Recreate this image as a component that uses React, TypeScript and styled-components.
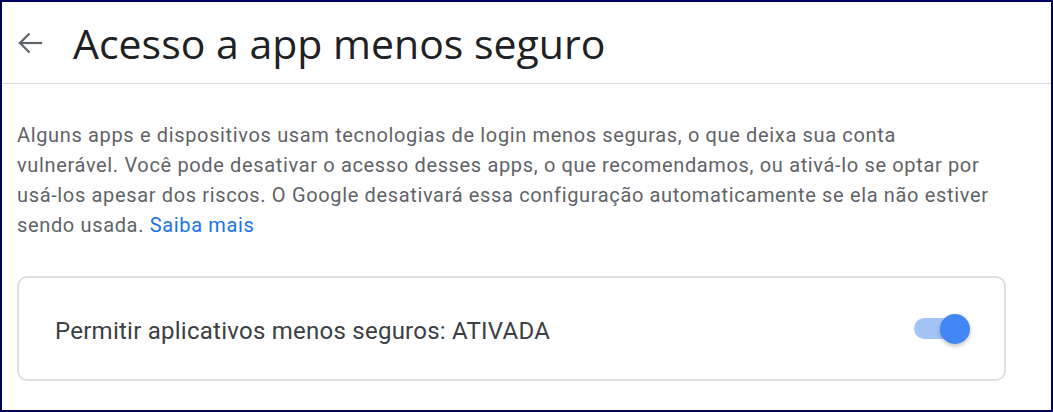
import styled, { createGlobalStyle } from 'styled-components'

const GlobalStyle = createGlobalStyle`
  html, body {
    margin: 0;
    padding: 0;
    background: #fff;
  }
  * {
    box-sizing: border-box;
  }
`

const Frame = styled.div`
  width: 1053px;
  height: 412px;
  border: 2px solid #00005e;
  background: #fff;
  font-family: Roboto, "Liberation Sans", sans-serif;
  overflow: hidden;
`

const Header = styled.header`
  display: flex;
  align-items: center;
  height: 82px;
  padding: 0 0 0 14px;
  border-bottom: 1px solid #dadce0;
`

const BackButton = styled.button`
  display: flex;
  align-items: center;
  justify-content: center;
  width: 28px;
  height: 28px;
  padding: 0;
  margin-right: 29px;
  border: none;
  background: none;
  color: #5f6368;
  cursor: pointer;
`

const Title = styled.h1`
  margin: 0;
  font-family: "Open Sans", Roboto, sans-serif;
  font-size: 41px;
  font-weight: 400;
  color: #202124;
  letter-spacing: 0;
`

const Content = styled.main`
  padding: 36px 45px 0 15px;
`

const Description = styled.p`
  max-width: 975px;
  margin: 0 0 36px;
  font-size: 20px;
  line-height: 30px;
  letter-spacing: 0.65px;
  color: #5f6368;
`

const Link = styled.a`
  color: #1a73e8;
  text-decoration: none;
`

const Card = styled.div`
  display: flex;
  align-items: center;
  justify-content: space-between;
  height: 105px;
  padding: 0 34px 0 36px;
  border: 2px solid #e0e0e4;
  border-radius: 10px;
`

const CardLabel = styled.span`
  padding-top: 5px;
  font-size: 24px;
  letter-spacing: 0.25px;
  color: #3c4043;
`

const Switch = styled.div`
  position: relative;
  width: 56px;
  height: 30px;
  display: flex;
  align-items: center;
`

const Track = styled.div<{ $on: boolean }>`
  width: 46px;
  height: 21px;
  border-radius: 11px;
  background: ${ p => p.$on ? '#a4c4f8' : '#bdc1c6' };
`

const Thumb = styled.div<{ $on: boolean }>`
  position: absolute;
  top: 0;
  left: ${ p => p.$on ? '26px' : '0' };
  width: 30px;
  height: 30px;
  border-radius: 50%;
  background: ${ p => p.$on ? '#4287f5' : '#fff' };
  box-shadow: 0 2px 4px rgba(0, 0, 0, 0.25);
`

const ArrowIcon = () => (
  <svg width="26" height="24" viewBox="0 0 26 24" fill="none" stroke="currentColor" strokeWidth="2.2" strokeLinecap="square">
    <path d="M24 12H3" />
    <path d="M12.5 2.5L3 12l9.5 9.5" strokeLinecap="butt" />
  </svg>
)

export default function App() {
  const enabled = true

  return (
    <>
      <GlobalStyle />
      <Frame>
        <Header>
          <BackButton aria-label="Voltar">
            <ArrowIcon />
          </BackButton>
          <Title>Acesso a app menos seguro</Title>
        </Header>
        <Content>
          <Description>
            Alguns apps e dispositivos usam tecnologias de login menos seguras, o que deixa sua conta
            vulnerável. Você pode desativar o acesso desses apps, o que recomendamos, ou ativá-lo se optar por
            usá-los apesar dos riscos. O Google desativará essa configuração automaticamente se ela não estiver
            sendo usada. <Link href="#">Saiba mais</Link>
          </Description>
          <Card>
            <CardLabel>Permitir aplicativos menos seguros: ATIVADA</CardLabel>
            <Switch>
              <Track $on={ enabled } />
              <Thumb $on={ enabled } />
            </Switch>
          </Card>
        </Content>
      </Frame>
    </>
  )
}
